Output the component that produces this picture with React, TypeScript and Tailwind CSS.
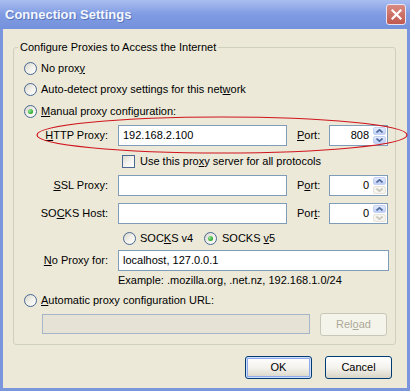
import type { ReactNode } from "react";

const ui = "font-['Liberation_Sans',Arial,sans-serif] text-[11px] leading-[13px] text-black";

const Radio = ({ checked = false }: { checked?: boolean }) => (
	<span className="flex h-[13px] w-[13px] shrink-0 items-center justify-center rounded-full border border-[#4a6893] bg-gradient-to-br from-[#d6d4cb] via-[#f1f0ea] to-white">
		{checked ? (
			<span className="h-[5px] w-[5px] rounded-full bg-[radial-gradient(circle_at_35%_35%,#9ae69a,#21a121_75%)]" />
		) : null}
	</span>
);

const RadioRow = ({ checked, children, h }: { checked?: boolean; children: ReactNode; h: string }) => (
	<div className={`flex items-center gap-[4px] pl-[10px] ${h}`}>
		<Radio checked={checked} />
		<span>{children}</span>
	</div>
);

const TextBox = ({ value = "", w }: { value?: string; w: string }) => (
	<div className={`flex h-[21px] items-center border border-[#7f9db9] bg-white pl-[4px] ${w}`}>{value}</div>
);

const Arrow = ({ up, on }: { up?: boolean; on: boolean }) => (
	<span
		className={`flex flex-1 items-center justify-center rounded-[2px] border ${
			on
				? "border-[#c3d1f3] bg-gradient-to-b from-[#e3eafc] to-[#bfcef5]"
				: "border-[#e6e4dc] bg-[#f5f4ee]"
		}`}
	>
		<svg width="7" height="4" viewBox="0 0 7 4">
			<polyline
				points={up ? "0.5,3.5 3.5,0.8 6.5,3.5" : "0.5,0.5 3.5,3.2 6.5,0.5"}
				fill="none"
				stroke={on ? "#4d6a9e" : "#c9c7ba"}
				strokeWidth="1.6"
			/>
		</svg>
	</span>
);

const SpinBox = ({ value, down }: { value: string; down: boolean }) => (
	<div className="flex h-[21px] w-[59px] border border-[#7f9db9] bg-white">
		<span className="flex flex-1 items-center justify-end pr-[3px]">{value}</span>
		<span className="flex w-[15px] flex-col gap-px p-px">
			<Arrow up on />
			<Arrow on={down} />
		</span>
	</div>
);

const ProxyRow = ({ label, port, value = "", portValue, down }: { label: ReactNode; port: ReactNode; value?: string; portValue: string; down: boolean }) => (
	<div className="flex h-[21px] items-center">
		<span className="w-[94px] text-right">{label}</span>
		<span className="w-[10px]" />
		<TextBox value={value} w="w-[169px]" />
		<span className="w-[42px] pl-[10px]">{port}</span>
		<SpinBox value={portValue} down={down} />
	</div>
);

const XPButton = ({ children, primary, disabled, w }: { children: ReactNode; primary?: boolean; disabled?: boolean; w: string }) => (
	<div
		className={`flex h-[23px] items-center justify-center rounded-[3px] border ${w} ${
			disabled
				? "border-[#c9c7ba] bg-[#f5f4ea] text-[#aca899]"
				: "border-[#003c74] bg-gradient-to-b from-white via-[#f4f3ee] to-[#d8d4c6]"
		} ${primary ? "shadow-[inset_0_0_0_1px_#cfdefa,inset_0_0_0_2px_#8eaaea]" : ""}`}
	>
		{children}
	</div>
);

export default function App() {
	return (
		<div className={`relative flex h-[391px] w-[410px] flex-col bg-[#7b96dc] ${ui}`}>
			<div className="flex h-[29px] shrink-0 items-center justify-between bg-gradient-to-b from-[#a9bdf0] via-[#7f9be2] to-[#7491dc] pl-[5px] pr-[4px]">
				<span className="font-['Liberation_Sans',Arial,sans-serif] text-[13px] font-bold text-[#f4f7ff] [text-shadow:1px_1px_0_#5a74b8]">
					Connection Settings
				</span>
				<div className="flex h-[21px] w-[20px] items-center justify-center rounded-[3px] border border-[#e8e4f0] bg-gradient-to-b from-[#d98a82] to-[#c0594f]">
					<svg width="11" height="11" viewBox="0 0 11 11">
						<path d="M1.5 1.5 L9.5 9.5 M9.5 1.5 L1.5 9.5" stroke="white" strokeWidth="2.2" strokeLinecap="square" />
					</svg>
				</div>
			</div>

			<div className="mx-[3px] mb-[3px] flex flex-1 flex-col bg-[#ece9d8]">
				<fieldset className="ml-[10px] mt-[12px] w-[383px] rounded-[3px] border border-[#d0d0bf] pb-[8px]">
					<legend className="ml-[4px] px-[2px] leading-[13px]">Configure Proxies to Access the Internet</legend>

					<div className="pt-[3px]">
						<RadioRow h="h-[22px]">
							No prox<u>y</u>
						</RadioRow>
					</div>
					<RadioRow h="h-[21px]">
						Auto-detect proxy settings for this net<u>w</u>ork
					</RadioRow>
					<RadioRow h="h-[22px]" checked>
						<u>M</u>anual proxy configuration:
					</RadioRow>

					<div className="mt-[3px]">
						<ProxyRow
							label={<><u>H</u>TTP Proxy:</>}
							port={<><u>P</u>ort:</>}
							value="192.168.2.100"
							portValue="808"
							down
						/>
					</div>

					<div className="mt-[4px] flex h-[22px] items-center gap-[5px] pl-[108px]">
						<span className="h-[13px] w-[13px] border border-[#4a6893] bg-gradient-to-br from-[#dcdad2] via-[#f3f2ee] to-white" />
						<span>
							Use this pro<u>x</u>y server for all protocols
						</span>
					</div>

					<div className="mt-[3px]">
						<ProxyRow label={<><u>S</u>SL Proxy:</>} port={<>P<u>o</u>rt:</>} portValue="0" down={false} />
					</div>
					<div className="mt-[7px]">
						<ProxyRow label={<>SO<u>C</u>KS Host:</>} port={<>Por<u>t</u>:</>} portValue="0" down={false} />
					</div>

					<div className="mt-[3px] flex h-[22px] items-center pl-[109px]">
						<div className="flex w-[81px] items-center gap-[4px]">
							<Radio />
							<span>
								SOC<u>K</u>S v4
							</span>
						</div>
						<div className="flex items-center gap-[5px]">
							<Radio checked />
							<span>
								SOCKS <u>v</u>5
							</span>
						</div>
					</div>

					<div className="mt-[1px] flex h-[21px] items-center">
						<span className="w-[94px] text-right">
							<u>N</u>o Proxy for:
						</span>
						<span className="w-[10px]" />
						<TextBox value="localhost, 127.0.0.1" w="w-[271px]" />
					</div>

					<div className="flex h-[18px] items-center pl-[104px]">Example: .mozilla.org, .net.nz, 192.168.1.0/24</div>

					<RadioRow h="h-[22px]">
						<u>A</u>utomatic proxy configuration URL:
					</RadioRow>

					<div className="mt-[2px] flex items-start gap-[10px] pl-[28px]">
						<div className="mt-[1px] h-[20px] w-[268px] border border-[#a5b6c9] bg-[#e6e3d6]" />
						<XPButton disabled w="w-[67px] h-[21px]">
							Rel<u>o</u>ad
						</XPButton>
					</div>
				</fieldset>

				<div className="mt-[11px] flex justify-end gap-[13px] pr-[15px]">
					<XPButton primary w="w-[67px]">
						OK
					</XPButton>
					<XPButton w="w-[67px]">Cancel</XPButton>
				</div>
			</div>

			<svg className="pointer-events-none absolute left-0 top-0" width="410" height="391">
				<ellipse cx="222" cy="135" rx="185" ry="18" fill="none" stroke="#d0141c" strokeWidth="1.2" />
			</svg>
		</div>
	);
}
